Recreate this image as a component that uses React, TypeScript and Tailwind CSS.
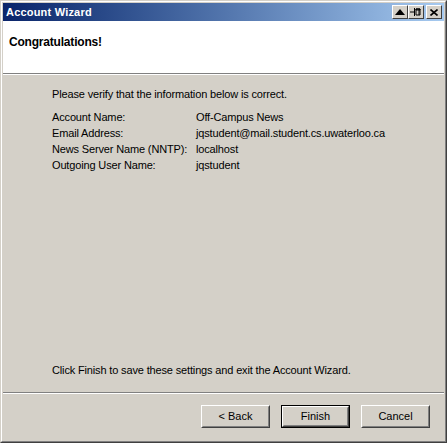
import React from "react";

const font = { fontFamily: '"Liberation Sans", Arial, sans-serif' };

const rows: [string, string][] = [
  ["Account Name:", "Off-Campus News"],
  ["Email Address:", "jqstudent@mail.student.cs.uwaterloo.ca"],
  ["News Server Name (NNTP):", "localhost"],
  ["Outgoing User Name:", "jqstudent"],
];

const CapButton = ({ children }: { children: React.ReactNode }) => (
  <div className="w-[16px] h-[14px] bg-[#d4d0c8] border border-t-white border-l-white border-r-[#404040] border-b-[#404040] flex items-center justify-center">
    {children}
  </div>
);

const Button = ({ label, primary }: { label: string; primary?: boolean }) => (
  <div
    className={
      primary
        ? "w-[69px] h-[23px] border border-black"
        : "w-[69px] h-[23px]"
    }
  >
    <div className="w-full h-full border border-t-white border-l-white border-r-[#404040] border-b-[#404040] bg-[#d4d0c8]">
      <div className="w-full h-full border border-t-[#d4d0c8] border-l-[#d4d0c8] border-r-[#808080] border-b-[#808080] flex items-center justify-center text-[11px] text-black">
        {label}
      </div>
    </div>
  </div>
);

export default function App() {
  return (
    <div style={font} className="w-[447px] h-[443px] bg-[#d4d0c8] border border-t-[#d4d0c8] border-l-[#d4d0c8] border-r-[#404040] border-b-[#404040]">
      <div className="w-full h-full border border-t-white border-l-white border-r-[#808080] border-b-[#808080] p-px flex flex-col">
        <div className="h-[18px] flex items-center justify-between pl-[3px] pr-[2px] bg-gradient-to-r from-[#0a246a] to-[#a6caf0]">
          <span className="text-white font-bold text-[11px] tracking-[0.2px]">Account Wizard</span>
          <div className="flex items-center">
            <CapButton>
              <svg width="10" height="6" viewBox="0 0 10 6">
                <path d="M5 0 L10 6 L0 6 Z" fill="black" />
              </svg>
            </CapButton>
            <CapButton>
              <svg width="12" height="10" viewBox="0 0 12 10">
                <path d="M0 5 H4" stroke="black" strokeWidth="1" />
                <path d="M4.5 1 V9" stroke="black" strokeWidth="1" />
                <path d="M6 2 H10 V8 H6 Z M6 2 H10 V3 H6 Z" fill="none" stroke="black" strokeWidth="1" />
                <path d="M9 2.5 V8" stroke="black" strokeWidth="1" />
              </svg>
            </CapButton>
            <div className="ml-[2px]">
              <CapButton>
                <svg width="8" height="7" viewBox="0 0 8 7">
                  <path d="M0.5 0.5 L7.5 6.5 M7.5 0.5 L0.5 6.5" stroke="black" strokeWidth="1.6" />
                </svg>
              </CapButton>
            </div>
          </div>
        </div>
        <div className="h-[52px] bg-white pl-[6px] pt-[8px]">
          <span className="font-bold text-[12px] tracking-[-0.2px] text-black">Congratulations!</span>
        </div>
        <div className="h-px bg-[#808080]" />
        <div className="h-px bg-white" />
        <div className="flex-1 flex flex-col pl-[49px] pt-[11px] text-[11px] tracking-[-0.15px] text-black">
          <div>Please verify that the information below is correct.</div>
          <div className="mt-[7px] flex flex-col">
            {rows.map(([k, v]) => (
              <div key={k} className="flex h-[16px] items-center">
                <div className="w-[144px]">{k}</div>
                <div>{v}</div>
              </div>
            ))}
          </div>
          <div className="mt-auto mb-[14px]">Click Finish to save these settings and exit the Account Wizard.</div>
        </div>
        <div className="h-px bg-[#808080]" />
        <div className="h-px bg-white" />
        <div className="h-[46px] flex justify-end gap-[11px] pr-[14px] pt-[11px]">
          <Button label="< Back" />
          <Button label="Finish" primary />
          <Button label="Cancel" />
        </div>
      </div>
    </div>
  );
}
